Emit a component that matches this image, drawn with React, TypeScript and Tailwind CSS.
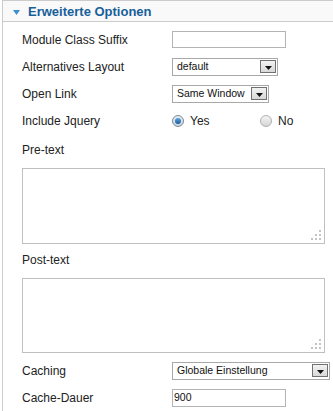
import React from "react";

function Arrow() {
  return (
    <div className="w-[16px] h-[13px] border border-[#707070] bg-gradient-to-b from-[#f2f2f2] to-[#d8d8d8] flex items-center justify-center">
      <svg width="7" height="4" viewBox="0 0 7 4" className="mt-[3px]">
        <polygon points="0,0 7,0 3.5,4" fill="#111" />
      </svg>
    </div>
  );
}

function Select({ value, w }: { value: string; w: string }) {
  return (
    <div className={`${w} h-[18px] border border-[#a8a8a8] bg-white flex items-center justify-between pl-[4px] pr-[1px]`}>
      <span className="text-[10.5px] text-[#111] leading-none">{value}</span>
      <Arrow />
    </div>
  );
}

function Grip() {
  return (
    <svg width="12" height="12" viewBox="0 0 12 12" className="absolute right-[2px] bottom-[2px]">
      <rect x="9" y="1" width="2" height="2" fill="#c4c4c4" />
      <rect x="5" y="5" width="2" height="2" fill="#c4c4c4" />
      <rect x="9" y="5" width="2" height="2" fill="#c4c4c4" />
      <rect x="1" y="9" width="2" height="2" fill="#c4c4c4" />
      <rect x="5" y="9" width="2" height="2" fill="#c4c4c4" />
      <rect x="9" y="9" width="2" height="2" fill="#c4c4c4" />
    </svg>
  );
}

function Radio({ checked }: { checked: boolean }) {
  return (
    <div
      className={`w-[12px] h-[12px] rounded-full border flex items-center justify-center ${
        checked ? "border-[#7d8a96] bg-gradient-to-b from-[#e8eef4] to-[#c9d3dc]" : "border-[#b0b0b0] bg-gradient-to-b from-[#f4f4f4] to-[#d6d6d6]"
      }`}
    >
      {checked && <div className="w-[6px] h-[6px] rounded-full bg-gradient-to-b from-[#5aa6e6] to-[#1b5c9a]" />}
    </div>
  );
}

export default function App() {
  const label = "w-[150px] shrink-0 text-[12px] text-[#222]";
  return (
    <div className="min-h-screen bg-white pl-[2px] font-['Liberation_Sans',Arial,sans-serif]">
      <div className="border-l border-t border-[#cccccc] min-h-[411px]">
        <div className="h-[21px] bg-[#f9f9f9] border-b border-[#cccccc] flex items-center pl-[10px]">
          <svg width="7" height="5" viewBox="0 0 7 5" className="mt-[2px]">
            <polygon points="0,0 7,0 3.5,5" fill="#3a8fcf" />
          </svg>
          <span className="ml-[8px] text-[13px] font-bold text-[#17609a] leading-none">Erweiterte Optionen</span>
        </div>
        <div className="pl-[19px] pt-[4px]">
          <div className="h-[27px] flex items-center">
            <span className={label}>Module Class Suffix</span>
            <div className="w-[114px] h-[17px] border border-[#b4b4b4] bg-white" />
          </div>
          <div className="h-[27px] flex items-center">
            <span className={label}>Alternatives Layout</span>
            <Select value="default" w="w-[106px]" />
          </div>
          <div className="h-[27px] flex items-center">
            <span className={label}>Open Link</span>
            <Select value="Same Window" w="w-[97px]" />
          </div>
          <div className="h-[27px] flex items-center">
            <span className={label}>Include Jquery</span>
            <div className="w-[88px] flex items-center">
              <Radio checked />
              <span className="ml-[6px] text-[12px] text-[#222]">Yes</span>
            </div>
            <div className="flex items-center">
              <Radio checked={false} />
              <span className="ml-[6px] text-[12px] text-[#222]">No</span>
            </div>
          </div>
          <div className="mt-[8px] h-[16px] flex items-center text-[12px] text-[#222]">Pre-text</div>
          <div className="relative mt-[10px] w-[303px] h-[76px] border border-[#c0c0c0] bg-white">
            <Grip />
          </div>
          <div className="mt-[8px] h-[16px] flex items-center text-[12px] text-[#222]">Post-text</div>
          <div className="relative mt-[10px] w-[303px] h-[75px] border border-[#c0c0c0] bg-white">
            <Grip />
          </div>
          <div className="mt-[4px] h-[27px] flex items-center">
            <span className={label}>Caching</span>
            <Select value="Globale Einstellung" w="w-[158px]" />
          </div>
          <div className="h-[27px] flex items-center">
            <span className={label}>Cache-Dauer</span>
            <div className="w-[114px] h-[18px] border border-[#b4b4b4] bg-white flex items-center pl-[1px]">
              <span className="text-[10.5px] text-[#111] leading-none">900</span>
            </div>
          </div>
        </div>
      </div>
    </div>
  );
}
